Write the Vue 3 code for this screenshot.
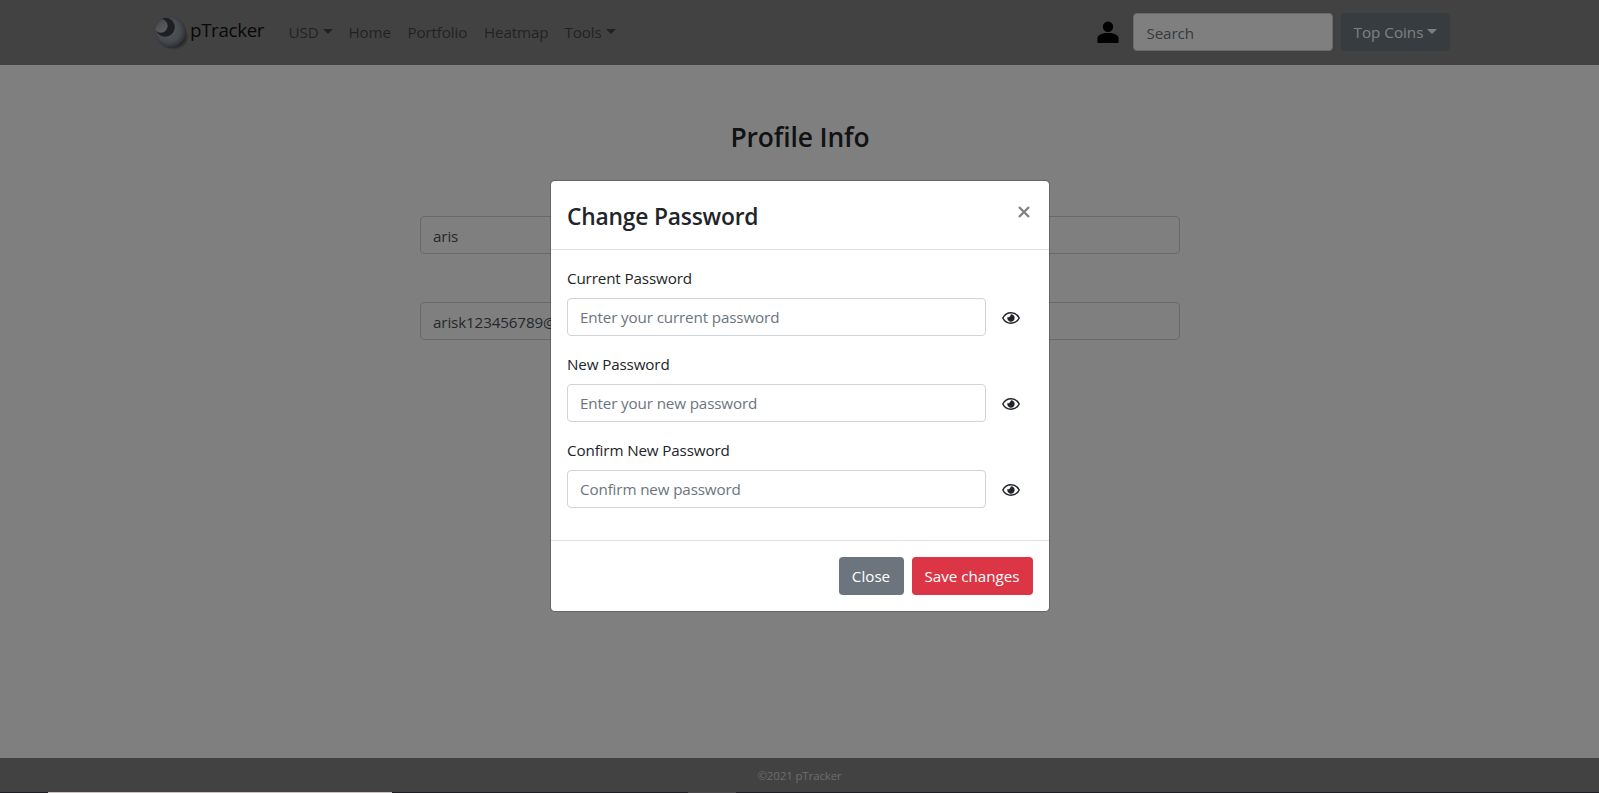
<script setup>
const leftLinks = [
  { text: 'USD', caret: true, cls: 'usd' },
  { text: 'Home', cls: 'home' },
  { text: 'Portfolio', cls: 'portfolio' },
  { text: 'Heatmap', cls: 'heatmap' },
  { text: 'Tools', caret: true, cls: 'tools' },
]
const profile = ['aris', 'arisk123456789@']
const fields = [
  { label: 'Current Password', hint: 'Enter your current password' },
  { label: 'New Password', hint: 'Enter your new password' },
  { label: 'Confirm New Password', hint: 'Confirm new password' },
]
</script>

<template>
  <div class="screen">
    <nav class="navbar">
      <a class="brand">
        <svg class="logo" width="36" height="36" viewBox="0 0 36 36">
          <defs>
            <radialGradient id="ball" cx="0.45" cy="0.45" r="0.58">
              <stop offset="0" stop-color="#a9afb8" />
              <stop offset="0.65" stop-color="#8d939c" />
              <stop offset="0.9" stop-color="#666c76" />
              <stop offset="1" stop-color="#4a505a" />
            </radialGradient>
            <radialGradient id="shade">
              <stop offset="0.6" stop-color="#222" stop-opacity="0.8" />
              <stop offset="1" stop-color="#222" stop-opacity="0" />
            </radialGradient>
            <linearGradient id="face" x1="0" y1="0" x2="0.6" y2="1">
              <stop offset="0" stop-color="#868c95" />
              <stop offset="1" stop-color="#b4b8be" />
            </linearGradient>
            <clipPath id="round"><circle cx="16.5" cy="17" r="15.4" /></clipPath>
          </defs>
          <ellipse cx="19.5" cy="22" rx="15.5" ry="13" fill="url(#shade)" />
          <circle cx="16.5" cy="17" r="15.4" fill="url(#ball)" />
          <g clip-path="url(#round)">
            <circle cx="11.2" cy="12.2" r="9.6" fill="#3a3e45" />
            <circle cx="6.8" cy="10.8" r="6.9" fill="url(#face)" />
          </g>
        </svg>
        <span class="brand-name">pTracker</span>
      </a>
      <div class="links">
        <a v-for="l in leftLinks" :key="l.text" class="link" :class="l.cls">
          {{ l.text }}<i v-if="l.caret" class="caret"></i>
        </a>
      </div>
      <svg class="user" width="22" height="23" viewBox="0 0 22 23">
        <circle cx="11" cy="5.7" r="5.2" />
        <path d="M.5 22V17C.5 13.600 5.500 12 11 12s10.500 1.600 10.500 5V22z" />
      </svg>
      <div class="control search">Search</div>
      <div class="btn coins">Top Coins<i class="caret"></i></div>
    </nav>

    <main class="content">
      <h1>Profile Info</h1>
      <div v-for="p in profile" :key="p" class="control info">{{ p }}</div>
    </main>

    <footer class="footer">©2021 pTracker</footer>

    <div class="backdrop">
      <section class="modal">
        <header>
          <h2>Change Password</h2>
          <svg class="close" width="12" height="12" viewBox="0 0 12 12">
            <path d="M1 1 11 11M11 1 1 11" />
          </svg>
        </header>
        <div class="body">
          <div v-for="f in fields" :key="f.label" class="group">
            <label>{{ f.label }}</label>
            <div class="row">
              <div class="control entry">{{ f.hint }}</div>
              <svg class="eye" width="18" height="12" viewBox="0 0 18 12">
                <path
                  class="lid"
                  d="M.8 6C2.5 2.6 5.5.8 9 .8S15.500 2.600 17.200 6C15.500 9.400 12.500 11.200 9 11.200S2.500 9.400.8 6z"
                />
                <path d="M9 2.300A3.700 3.700 0 1 1 5.400 5Q7 5.500 7.800 4.600T9 2.300z" />
              </svg>
            </div>
          </div>
        </div>
        <div class="actions">
          <div class="btn secondary">Close</div>
          <div class="btn danger">Save changes</div>
        </div>
      </section>
    </div>

    <div class="strip"><i class="dark"></i><i class="light"></i><i class="gap"></i><i class="mid"></i></div>
  </div>
</template>

<style>
body {
  margin: 0;
  overflow: hidden;
}
</style>

<style scoped>
* {
  box-sizing: border-box;
}
.screen {
  position: relative;
  width: 1599px;
  height: 793px;
  display: flex;
  flex-direction: column;
  background: #fff;
  color: #212529;
  font-family: 'Open Sans', 'Noto Sans', sans-serif;
  font-size: 15.2px;
  letter-spacing: -0.13px;
  line-height: 24px;
  white-space: nowrap;
  overflow: hidden;
}
.navbar {
  height: 65px;
  flex: none;
  display: flex;
  align-items: center;
  padding: 0 149px 2px 154px;
  background: #848484;
}
.brand {
  display: flex;
  align-items: center;
  width: 126px;
  color: rgba(0, 0, 0, 0.9);
}
.logo {
  margin-top: 2px;
}
.brand-name {
  font-size: 18.8px;
  letter-spacing: -0.36px;
  margin-top: -4px;
}
.links {
  flex: 1;
  display: flex;
}
.link {
  padding: 0 8px;
  color: rgba(0, 0, 0, 0.5);
}
.usd {
  width: 60.5px;
  padding-left: 8.5px;
}
.home {
  width: 59px;
}
.portfolio {
  width: 76.5px;
}
.heatmap {
  width: 80.5px;
}
.caret {
  display: inline-block;
  margin-left: 4px;
  vertical-align: 4px;
  border-top: 5px solid;
  border-left: 5px solid transparent;
  border-right: 5px solid transparent;
}
.user {
  margin: 2px 14px 0 0;
}
.control {
  height: 38px;
  padding: 7px 12.5px;
  border: 1px solid #ced4da;
  border-radius: 4px;
  background: #fff;
  color: #6c757d;
}
.search {
  width: 200px;
  margin-right: 8px;
}
.btn {
  height: 38px;
  padding: 7px 0;
  border-radius: 4px;
  color: #fff;
  letter-spacing: 0;
  text-align: center;
}
.coins {
  width: 109px;
  background: #6c7880;
}
.content {
  flex: 1;
  display: flex;
  flex-direction: column;
  align-items: center;
}
h1,
h2 {
  margin: 0;
  font-weight: 600;
}
h1 {
  margin-top: 55px;
  padding-left: 1px;
  font-size: 26.4px;
  line-height: 34px;
}
.info {
  width: 760px;
  margin-top: 48px;
  color: #495057;
}
h1 + .info {
  margin-top: 62px;
}
.footer {
  height: 35px;
  flex: none;
  padding-top: 6px;
  background: #848484;
  color: #d8d8d8;
  font-size: 11.5px;
  text-align: center;
}
.backdrop {
  position: absolute;
  inset: 0;
  display: flex;
  justify-content: center;
  align-items: flex-start;
  padding-top: 180px;
  background: rgba(0, 0, 0, 0.5);
}
.modal {
  width: 500px;
  height: 432px;
  border: 1px solid rgba(0, 0, 0, 0.2);
  border-radius: 5px;
  background: #fff;
  background-clip: padding-box;
}
header {
  height: 69px;
  display: flex;
  justify-content: space-between;
  padding: 18px 18.5px 0 16.5px;
  border-bottom: 1px solid #dee2e6;
}
h2 {
  font-size: 22.8px;
  letter-spacing: -0.2px;
  line-height: 36px;
}
.close {
  margin-top: 7px;
  fill: none;
  stroke: #808080;
  stroke-width: 2.3;
}
.body {
  height: 290px;
  padding: 16px;
}
.group {
  margin-bottom: 16px;
}
label {
  display: block;
  height: 32px;
  padding-left: 0.5px;
}
.row {
  display: flex;
  align-items: center;
}
.entry {
  width: 419px;
  padding-top: 6px;
}
.eye {
  margin: 2px 0 0 16.5px;
  fill: #212529;
}
.lid {
  fill: none;
  stroke: #212529;
  stroke-width: 1.5;
}
.actions {
  display: flex;
  justify-content: flex-end;
  gap: 8px;
  padding: 16px;
  border-top: 1px solid #dee2e6;
}
.secondary {
  width: 65px;
  background: #6c757d;
}
.danger {
  width: 121px;
  background: #dc3545;
}
.strip {
  position: absolute;
  left: 0;
  right: 0;
  bottom: 0;
  height: 1px;
  display: flex;
  background: #211b26;
}
.dark {
  width: 48px;
}
.light {
  width: 344px;
  background: #c9c3c4;
}
.gap {
  width: 296px;
}
.mid {
  width: 48px;
  background: #4c464d;
}
</style>
